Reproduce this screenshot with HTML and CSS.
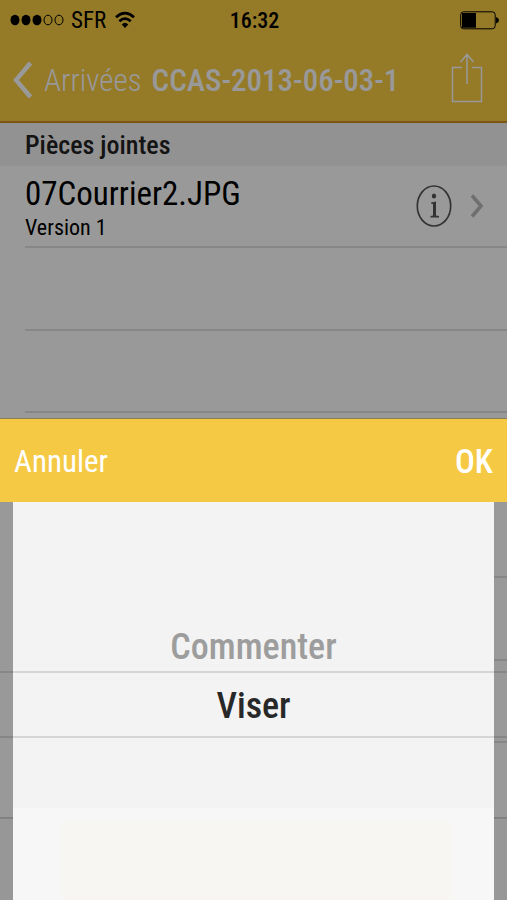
FILE: index.html
```html
<!DOCTYPE html>
<html lang="fr">
<head>
<meta charset="utf-8">
<meta name="viewport" content="width=device-width, initial-scale=1">
<title>CCAS-2013-06-03-1</title>
<link rel="stylesheet" href="styles.css">
</head>
<body>
<div class="screen">
  <header class="header">
    <div class="status">
      <div class="carrier">
        <svg width="54" height="14" viewBox="0 0 54 14" aria-hidden="true">
          <ellipse cx="5" cy="7" rx="4.5" ry="5.3"/>
          <ellipse cx="16" cy="7" rx="4.5" ry="5.3"/>
          <ellipse cx="27" cy="7" rx="4.5" ry="5.3"/>
          <g fill="none" stroke="#000"><ellipse cx="38" cy="7" rx="4" ry="4.8"/><ellipse cx="49" cy="7" rx="4" ry="4.8"/></g>
        </svg>
        <span>SFR</span>
        <svg width="20" height="18" viewBox="0 0 20 18" aria-hidden="true">
          <g fill="none" stroke="#000" stroke-width="2.6"><path d="M1 6.2Q10-1.8 19 6.2"/><path d="M4.3 10.3Q10 5 15.700 10.300"/></g>
          <path d="M10 17L6.700 13.400Q10 10.300 13.300 13.400Z"/>
        </svg>
      </div>
      <time class="clock">16:32</time>
      <svg class="battery" width="39" height="19" viewBox="0 0 39 19" aria-hidden="true">
        <rect x=".7" y=".8" width="34.500" height="17" rx="3" fill="none" stroke="#000"/>
        <path d="M2 2h14v14.700H2zM36 6q3 1 3 3.300T36 12.600z"/>
      </svg>
    </div>
    <nav class="nav">
      <button class="back" type="button">
        <svg width="20" height="38" viewBox="0 0 20 38" aria-hidden="true"><path d="M17.500 2L3 19l14.500 17" fill="none" stroke="#fff" stroke-width="4.500"/></svg>
        <span>Arrivées</span>
      </button>
      <h1 class="title">CCAS-2013-06-03-1</h1>
      <button class="share" type="button" aria-label="Partager">
        <svg width="32" height="50" viewBox="0 0 32 50" aria-hidden="true"><path d="M11 14.500H1.500v34h29v-34H21M16 31V2M9.500 9L16 1.500 22.500 9" fill="none" stroke="#fff" stroke-width="1.500"/></svg>
      </button>
    </nav>
  </header>
  <main class="content">
    <h2 class="section">Pièces jointes</h2>
    <ul class="rows">
      <li class="row">
        <div class="file">
          <span class="name">07Courrier2.JPG</span>
          <span class="version">Version 1</span>
        </div>
        <button class="info" type="button" aria-label="Informations">
          <svg width="36" height="42" viewBox="0 0 36 42" aria-hidden="true">
            <ellipse cx="18" cy="21" rx="16.700" ry="20" fill="none" stroke="#555" stroke-width="1.700"/>
            <ellipse cx="18" cy="11" rx="2.200" ry="2.500" fill="#555"/>
            <path d="M15 17.500l5-1v14l3 .6v1.400h-8.500v-1.400l2.500-.6V19l-2-.4z" fill="#555"/>
          </svg>
        </button>
        <svg width="14" height="24" viewBox="0 0 14 24" aria-hidden="true"><path d="M2 1.500L11 12 2 22.500" fill="none" stroke="#b9b9b9" stroke-width="3.500"/></svg>
      </li>
      <li class="row"></li><li class="row"></li><li class="row"></li><li class="row"></li><li class="row"></li><li class="row"></li>
    </ul>
  </main>
  <footer class="toolbar"></footer>
  <div class="dim"></div>
  <section class="sheet">
    <div class="actions">
      <button class="cancel" type="button">Annuler</button>
      <button class="ok" type="button">OK</button>
    </div>
    <div class="picker" role="listbox" aria-label="Action">
      <div class="option previous" role="option" aria-selected="false">Commenter</div>
      <div class="option selected" role="option" aria-selected="true">Viser</div>
      <div class="base"><div class="glow"></div></div>
    </div>
  </section>
</div>
</body>
</html>
```
FILE: styles.css
```css
* { box-sizing: border-box; }

body {
  margin: 0;
  color: #000;
  font-family: "Roboto Condensed", Roboto, "Liberation Sans", sans-serif;
}

h1, h2, ul { margin: 0; padding: 0; }
svg { display: block; flex: none; }

button {
  padding: 0;
  border: 0;
  background: none;
  color: inherit;
  font: inherit;
}

.screen {
  position: relative;
  display: flex;
  flex-direction: column;
  min-height: 100vh;
  overflow: hidden;
  background: #fff;
}

.header {
  height: 123px;
  border-bottom: 2px solid #d08f20;
  background: #f8cb44;
}

.status {
  display: grid;
  grid-template-columns: 1fr auto 1fr;
  align-items: center;
  height: 40px;
  padding: 0 8px 0 10px;
  font-size: 23px;
}

.carrier { display: flex; align-items: center; gap: 7px; }
.carrier span { margin-right: 2px; }
.clock { font-size: 22px; font-weight: 500; }
.battery { justify-self: end; }

.nav {
  display: flex;
  align-items: center;
  height: 80px;
  padding: 0 24px 0 13px;
  color: #fff;
  font-size: 31px;
}

.back { display: flex; align-items: center; gap: 11px; font-weight: 300; }
.title { margin-left: 10px; font-size: 31px; font-weight: 500; white-space: nowrap; }
.share { margin: 0 0 4px auto; }

.content { display: flex; flex: 1; flex-direction: column; }

.section {
  height: 43px;
  padding-left: 25px;
  background: #f4f4f4;
  color: #222;
  font-size: 26px;
  font-weight: 500;
  line-height: 44px;
}

.rows {
  display: grid;
  flex: 1;
  grid-template-rows: repeat(7, 1fr);
  padding: 0 0 74px 25px;
  list-style: none;
}

.row {
  display: flex;
  align-items: center;
  padding-right: 23px;
  border-bottom: 2px solid #e2e2e2;
}

.file { display: flex; flex: 1; flex-direction: column; padding-top: 4px; }
.name { font-size: 33px; line-height: 40px; }
.version { font-size: 22px; line-height: 28px; }
.info { margin-right: 18px; }

.toolbar { height: 83px; border-top: 2px solid #d8d8d8; background: #fcfcfc; }

.dim { position: absolute; inset: 0; background: rgba(0, 0, 0, 0.4); }

.sheet {
  position: absolute;
  right: 0;
  bottom: 0;
  left: 0;
  border-top: 1px solid #8a7c58;
}

.actions {
  display: flex;
  align-items: center;
  justify-content: space-between;
  height: 83px;
  padding: 2px 14px 0;
  background: #f5c944;
  color: #fff;
  font-size: 31px;
}

.ok { font-size: 33px; font-weight: 500; }

.picker {
  display: flex;
  flex-direction: column;
  height: 398px;
  padding-top: 119px;
  background: linear-gradient(#f3f3f3, #f3f3f3) center / calc(100% - 26px) 100% no-repeat;
  text-align: center;
  font-size: 36px;
  font-weight: 500;
}

.previous { height: 50px; color: #9d9d9d; line-height: 52px; }

.selected {
  height: 67px;
  border: solid rgba(0, 0, 0, 0.12);
  border-width: 2px 0;
  color: #282828;
  line-height: 66px;
}

.base {
  flex: 1;
  margin: 70px 13px 0;
  padding: 14px 41px 0 49px;
  background: #f7f7f7;
}

.glow { height: 100%; background: #f7f6f2; }
```
